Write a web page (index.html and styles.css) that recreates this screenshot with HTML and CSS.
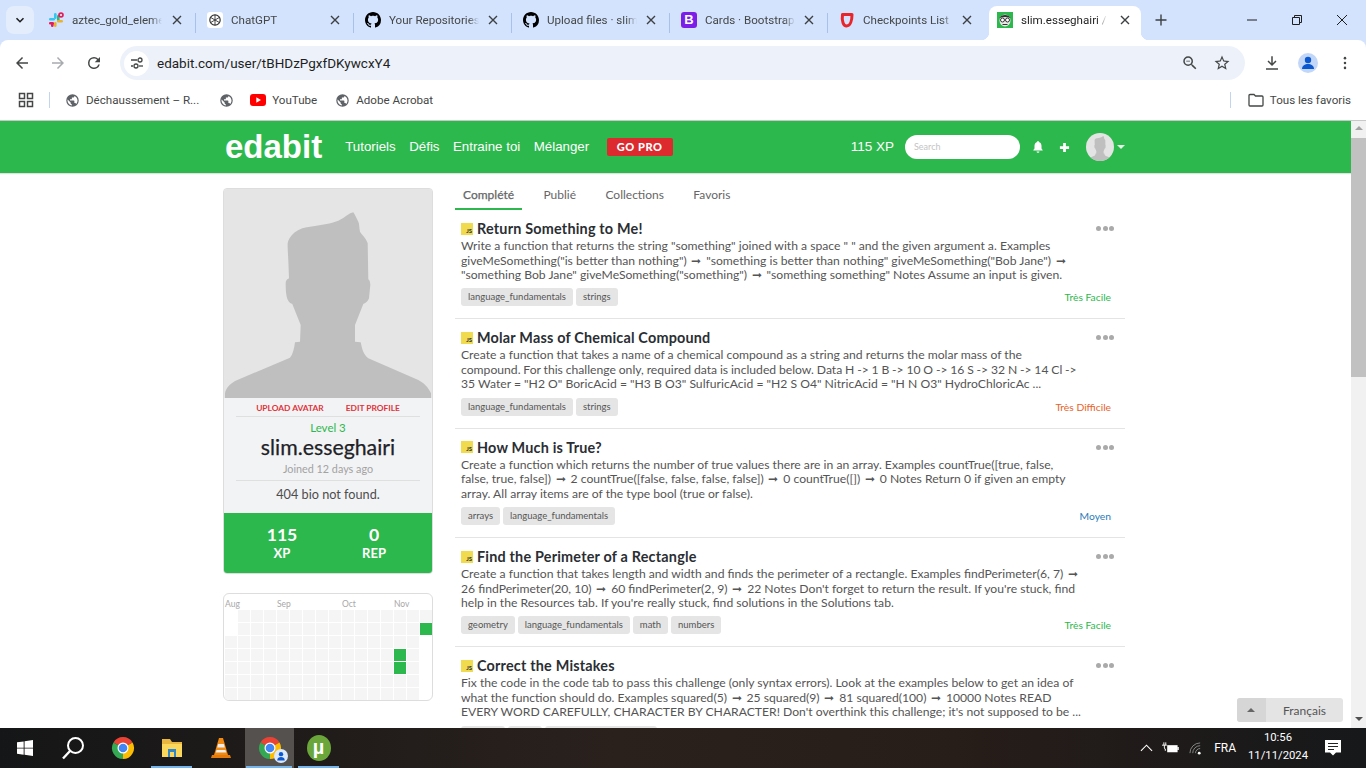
FILE: index.html
```html
<!DOCTYPE html>
<html lang="fr">
<head>
<meta charset="utf-8">
<title>slim.esseghairi / Edabit</title>
<link rel="stylesheet" href="styles.css">
</head>
<body>
<svg class="defs" width="0" height="0" aria-hidden="true">
  <symbol id="person" viewBox="0 0 208 209"><path d="M129.3 23.3C125 24 122 28 114.3 31.7C106 35 99 35.500 91 37C86 38 83 38 78.300 39.300C72 42 68 45 65.700 49C63 53 63.700 56 63.700 60L64.300 71L65 89.300C62 91 61.500 92 61.700 96C61.700 101 62 104 62.700 107.700C63.500 111 65 114 68.300 115L76.700 136L76 152.700L71 153.300C70 160 69 165 66 168.700L11 192C6 195 2 199 1 204.300V209H207V204.300C204 198 200 194 194.300 191L144.300 169.300C140 166 138.500 161 137.700 157.700L136.700 153.300L131 152.700V136L139.300 115C142 114 144 112 145 109.300L146.300 96C146.300 93 145.500 91 144.300 90.300L143.700 54.300C142 49 138 46 136 42.700C135 38 135.500 35 134.300 32.700C132.500 29 131 26 129.300 23.300Z"/></symbol>
  <symbol id="globe" viewBox="0 0 24 24"><path d="M12 2a10 10 0 1 0 0 20 10 10 0 0 0 0-20zM4 12c0-.6.1-1.200.2-1.800L9 15v1c0 1.100.9 2 2 2v2c-3.900-.5-7-3.900-7-8zm13.900 5.400c-.3-.8-1-1.400-1.900-1.400h-1v-3c0-.6-.4-1-1-1H8v-2h2c.6 0 1-.4 1-1V7h2c1.100 0 2-.9 2-2v-.4c2.900 1.200 5 4.100 5 7.400 0 2.100-.8 4-2.100 5.400z"/></symbol>
  <symbol id="github" viewBox="0 0 16 16"><path d="M8 0C3.580 0 0 3.580 0 8c0 3.540 2.290 6.530 5.470 7.590.4.070.55-.17.55-.38 0-.19-.01-.82-.01-1.490-2.010.37-2.530-.49-2.690-.94-.09-.23-.48-.94-.82-1.130-.28-.15-.68-.52-.01-.53.63-.01 1.080.58 1.230.82.720 1.210 1.870.87 2.330.66.070-.52.280-.87.510-1.070-1.780-.2-3.640-.89-3.640-3.950 0-.87.310-1.590.820-2.150-.08-.2-.36-1.020.08-2.120 0 0 .67-.21 2.200.82.640-.18 1.320-.27 2-.27s1.360.09 2 .27c1.530-1.040 2.200-.82 2.200-.82.440 1.100.160 1.920.08 2.120.51.560.82 1.270.82 2.150 0 3.070-1.870 3.750-3.650 3.950.29.250.54.730.54 1.480 0 1.070-.01 1.930-.01 2.200 0 .21.150.46.550.38A8.010 8.010 0 0 0 16 8c0-4.420-3.580-8-8-8z"/></symbol>
  <symbol id="chrome" viewBox="0 0 24 24"><path fill="#ea4335" d="M12 12L2.470 6.500A11 11 0 0 1 21.530 6.500Z"/><path fill="#fbbc04" d="M12 12L21.530 6.500A11 11 0 0 1 12 23Z"/><path fill="#34a853" d="M12 12L12 23A11 11 0 0 1 2.470 6.500Z"/><circle cx="12" cy="12" r="5.500" fill="#fff"/><circle cx="12" cy="12" r="4.300" fill="#4285f4"/></symbol>
  <symbol id="close" viewBox="0 0 12 12"><path d="M2 2l8 8M10 2l-8 8" fill="none" stroke="#3c4043" stroke-width="1.400"/></symbol>
</svg>

<div class="tabstrip">
  <button class="tabmenu"><svg width="10" height="10" viewBox="0 0 10 10"><path d="M1.500 3.200L5 6.700l3.500-3.500" fill="none" stroke="#1f1f1f" stroke-width="1.600"/></svg></button>
  <div class="tab sep">
    <svg class="fav" viewBox="0 0 16 16"><rect x="1" y="6" width="6" height="2.600" rx="1.300" fill="#36c5f0"/><rect x="6" y="1" width="2.600" height="6" rx="1.300" fill="#36c5f0"/><rect x="9" y="3" width="2.600" height="6" rx="1.300" fill="#2eb67d"/><rect x="9" y="8" width="6" height="2.600" rx="1.300" fill="#ecb22e"/><rect x="6" y="10" width="2.600" height="5" rx="1.300" fill="#ecb22e"/><rect x="1" y="10" width="5" height="2.600" rx="1.300" fill="#e01e5a"/><rect x="3" y="11" width="2.600" height="4" rx="1.300" fill="#e01e5a"/><circle cx="13" cy="3" r="2.800" fill="#e01e5a"/><circle cx="13" cy="3" r="1" fill="#fff"/></svg>
    <span class="tabtitle">aztec_gold_elements</span><svg class="x"><use href="#close"/></svg>
  </div>
  <div class="tab sep">
    <svg class="fav" viewBox="0 0 16 16"><rect width="16" height="16" rx="3" fill="#fff"/><circle cx="8" cy="8" r="5.200" fill="none" stroke="#333" stroke-width="1.200"/><path d="M8 2.800v10.400M3.500 5.400l9 5.200M12.500 5.400l-9 5.200" stroke="#333" stroke-width=".9"/></svg>
    <span class="tabtitle">ChatGPT</span><svg class="x"><use href="#close"/></svg>
  </div>
  <div class="tab sep">
    <svg class="fav"><use href="#github"/></svg>
    <span class="tabtitle">Your Repositories</span><svg class="x"><use href="#close"/></svg>
  </div>
  <div class="tab sep">
    <svg class="fav"><use href="#github"/></svg>
    <span class="tabtitle">Upload files · slim</span><svg class="x"><use href="#close"/></svg>
  </div>
  <div class="tab sep">
    <span class="fav bootstrap">B</span>
    <span class="tabtitle">Cards · Bootstrap</span><svg class="x"><use href="#close"/></svg>
  </div>
  <div class="tab">
    <svg class="fav" viewBox="0 0 16 16"><path d="M3.500 2.500h9.500C13 8 11.500 14 7.500 14 4.500 14 2.500 9 3.500 2.500z" fill="none" stroke="#e8252b" stroke-width="3" stroke-linejoin="round"/></svg>
    <span class="tabtitle">Checkpoints List</span><svg class="x"><use href="#close"/></svg>
  </div>
  <div class="tab active">
    <svg class="fav" viewBox="0 0 16 16"><rect width="16" height="16" fill="#2db84d"/><ellipse cx="8" cy="8.500" rx="5.500" ry="6" fill="#e8e8e8"/><path d="M2.500 6C4 2 12 2 13.500 6 10 4.500 6 4.500 2.500 6z" fill="#333"/><circle cx="5.500" cy="8" r="2" fill="#fff" stroke="#333"/><circle cx="10.500" cy="8" r="2" fill="#fff" stroke="#333"/><path d="M5.500 12.500h5" stroke="#333"/></svg>
    <span class="tabtitle short">slim.esseghairi / Edabit</span><svg class="x"><use href="#close"/></svg>
  </div>
  <svg class="newtab" viewBox="0 0 12 12"><path d="M6 .5v11M.5 6h11" stroke="#3c4043" stroke-width="1.400"/></svg>
  <div class="winctl">
    <svg viewBox="0 0 12 12"><path d="M1 6h10" stroke="#1f1f1f"/></svg>
    <svg viewBox="0 0 12 12"><path d="M1.500 3.500h7v7h-7zM3.500 3.500v-2h7v7h-2" fill="none" stroke="#1f1f1f"/></svg>
    <svg viewBox="0 0 12 12"><path d="M1 1l10 10M11 1L1 11" stroke="#1f1f1f"/></svg>
  </div>
</div>

<div class="toolbar">
  <svg class="tool" viewBox="0 0 24 24"><path fill="#444746" d="M20 11H7.830l5.590-5.590L12 4l-8 8 8 8 1.410-1.410L7.830 13H20z"/></svg>
  <svg class="tool" viewBox="0 0 24 24"><path fill="#a8abae" d="M4 11h12.170l-5.590-5.590L12 4l8 8-8 8-1.410-1.410L16.170 13H4z"/></svg>
  <svg class="tool" viewBox="0 0 24 24"><path fill="#444746" d="M17.650 6.350A7.960 7.960 0 0 0 12 4a8 8 0 1 0 7.740 10h-2.080A6 6 0 1 1 12 6c1.660 0 3.140.69 4.220 1.780L13 11h7V4l-2.350 2.350z"/></svg>
  <div class="omnibox">
    <span class="siteinfo"><svg width="14" height="14" viewBox="0 0 14 14"><path d="M1 4h6M1 10h2" stroke="#444746" stroke-width="1.300"/><circle cx="10" cy="4" r="2" fill="none" stroke="#444746" stroke-width="1.300"/><circle cx="6" cy="10" r="2" fill="none" stroke="#444746" stroke-width="1.300"/><path d="M9 10h4" stroke="#444746" stroke-width="1.300"/></svg></span>
    <span class="url">edabit.com/user/tBHDzPgxfDKywcxY4</span>
    <svg class="omniicon zoomicon" viewBox="0 0 24 24"><path fill="#444746" d="M15.500 14h-.79l-.28-.27A6.470 6.470 0 0 0 16 9.500 6.500 6.500 0 1 0 9.500 16c1.610 0 3.090-.59 4.230-1.570l.27.28v.79l5 4.990L20.490 19l-4.990-5zm-6 0C7.010 14 5 11.990 5 9.500S7.010 5 9.500 5 14 7.010 14 9.500 11.990 14 9.500 14zM7 9h5v1H7z"/></svg>
    <svg class="omniicon staricon" viewBox="0 0 24 24"><path fill="#444746" d="M22 9.240l-7.190-.62L12 2 9.190 8.630 2 9.240l5.460 4.730L5.820 21 12 17.270 18.180 21l-1.630-7.030L22 9.240zM12 15.400l-3.760 2.270 1-4.280-3.320-2.880 4.380-.38L12 6.100l1.710 4.040 4.380.38-3.320 2.880 1 4.280L12 15.400z"/></svg>
  </div>
  <svg class="tool" viewBox="0 0 24 24"><path fill="#444746" d="M12 16l-6-6 1.400-1.400 3.600 3.600V3h2v9.200l3.600-3.600L18 10zM4 19h16v2H4z"/></svg>
  <span class="profile"><svg width="16" height="16" viewBox="0 0 16 16"><circle cx="8" cy="5" r="3.200" fill="#0b57d0"/><path d="M2 14c0-3.500 3-5 6-5s6 1.500 6 5z" fill="#0b57d0"/></svg></span>
  <svg class="tool" viewBox="0 0 24 24"><circle cx="12" cy="5.500" r="1.700" fill="#444746"/><circle cx="12" cy="12" r="1.700" fill="#444746"/><circle cx="12" cy="18.500" r="1.700" fill="#444746"/></svg>
</div>

<div class="bookmarks">
  <svg class="apps" viewBox="0 0 16 16"><path d="M1.500 1.500h5v5h-5zM9.500 1.500h5v5h-5zM1.500 9.500h5v5h-5zM9.500 9.500h5v5h-5z" fill="none" stroke="#444746" stroke-width="1.500"/></svg>
  <span class="bmsep first"></span>
  <span class="bm"><svg class="bmicon"><use href="#globe"/></svg>Déchaussement – R...</span>
  <span class="bm solo"><svg class="bmicon"><use href="#globe"/></svg></span>
  <span class="bm"><svg class="yt" viewBox="0 0 16 12"><rect width="16" height="12" rx="3" fill="#f00"/><path d="M6.300 3.300v5.400L11 6z" fill="#fff"/></svg>YouTube</span>
  <span class="bm"><svg class="bmicon"><use href="#globe"/></svg>Adobe Acrobat</span>
  <span class="bmsep last"></span>
  <span class="bm allbm"><svg class="folder" viewBox="0 0 16 14"><path d="M1 2.500A1 1 0 0 1 2 1.500h4l1.500 1.500H14a1 1 0 0 1 1 1V12a1 1 0 0 1-1 1H2a1 1 0 0 1-1-1z" fill="none" stroke="#444746" stroke-width="1.300"/></svg>Tous les favoris</span>
</div>

<div class="viewport">
  <div class="page">
    <nav class="nav">
      <span class="logo">edabit</span>
      <a class="navlink">Tutoriels</a>
      <a class="navlink">Défis</a>
      <a class="navlink">Entraine toi</a>
      <a class="navlink">Mélanger</a>
      <span class="gopro">GO PRO</span>
      <span class="xp">115 XP</span>
      <span class="search">Search</span>
      <svg class="bell" viewBox="0 0 24 24"><path fill="#fff" d="M12 22a2.500 2.500 0 0 0 2.500-2.500h-5A2.500 2.500 0 0 0 12 22zm8-5l-2-2.500V10c0-3.200-2-5.800-4.500-6.500V3a1.500 1.500 0 0 0-3 0v.5C8 4.200 6 6.800 6 10v4.500L4 17v1h16z"/></svg>
      <svg class="plus" viewBox="0 0 12 12"><path d="M6 1v10M1 6h10" stroke="#fff" stroke-width="3"/></svg>
      <span class="navavatar"><svg width="28" height="28"><use href="#person"/></svg></span>
      <span class="caret"></span>
    </nav>

    <div class="content">
      <aside class="side">
        <section class="profilecard">
          <svg class="photo"><use href="#person"/></svg>
          <div class="info">
            <div class="links"><a>UPLOAD AVATAR</a><a>EDIT PROFILE</a></div>
            <div class="level">Level 3</div>
            <div class="name">slim.esseghairi</div>
            <div class="joined">Joined 12 days ago</div>
            <div class="bio">404 bio not found.</div>
          </div>
          <div class="stats">
            <div class="stat"><b>115</b><span>XP</span></div>
            <div class="stat"><b>0</b><span>REP</span></div>
          </div>
        </section>
        <section class="heatcard">
          <div class="months"><span class="m1">Aug</span><span class="m2">Sep</span><span class="m3">Oct</span><span class="m4">Nov</span></div>
          <div class="heat">
            <u></u><u></u><i></i><i></i><i></i><i></i><i></i>
            <i></i><i></i><i></i><i></i><i></i><i></i><i></i>
            <i></i><i></i><i></i><i></i><i></i><i></i><i></i>
            <i></i><i></i><i></i><i></i><i></i><i></i><i></i>
            <i></i><i></i><i></i><i></i><i></i><i></i><i></i>
            <i></i><i></i><i></i><i></i><i></i><i></i><i></i>
            <i></i><i></i><i></i><i></i><i></i><i></i><i></i>
            <i></i><i></i><i></i><i></i><i></i><i></i><i></i>
            <i></i><i></i><i></i><i></i><i></i><i></i><i></i>
            <i></i><i></i><i></i><i></i><i></i><i></i><i></i>
            <i></i><i></i><i></i><i></i><i></i><i></i><i></i>
            <i></i><i></i><i></i><i></i><i></i><i></i><i></i>
            <i></i><i></i><i></i><i></i><i></i><i></i><i></i>
            <i></i><i></i><i></i><i class="on"></i><i class="on"></i><i></i><i></i>
            <i></i><i></i><i></i><i></i><i></i><i></i><i></i>
            <i></i><i class="on"></i><u></u><u></u><u></u><u></u><u></u>
          </div>
        </section>
      </aside>

      <main class="feed">
        <div class="feedtabs">
          <a class="ftab selected">Complété</a>
          <a class="ftab">Publié</a>
          <a class="ftab">Collections</a>
          <a class="ftab">Favoris</a>
        </div>

        <article class="item">
          <div class="itemhead"><span class="js">JS</span><h3>Return Something to Me!</h3><span class="dots"><i></i><i></i><i></i></span></div>
          <p class="desc">Write a function that returns the string "something" joined with a space " " and the given argument a. Examples giveMeSomething("is better than nothing") <span class="arr">➞</span> "something is better than nothing" giveMeSomething("Bob Jane") <span class="arr">➞</span> "something Bob Jane" giveMeSomething("something") <span class="arr">➞</span> "something something" Notes Assume an input is given.</p>
          <div class="itemfoot"><span class="tag">language_fundamentals</span><span class="tag">strings</span><span class="diff easy">Très Facile</span></div>
        </article>

        <article class="item">
          <div class="itemhead"><span class="js">JS</span><h3>Molar Mass of Chemical Compound</h3><span class="dots"><i></i><i></i><i></i></span></div>
          <p class="desc">Create a function that takes a name of a chemical compound as a string and returns the molar mass of the <span class="tight">compound. For this challenge only, required data is included below. Data H -&#8288;&gt; 1 B -&#8288;&gt; 10 O -&#8288;&gt; 16 S -&#8288;&gt; 32 N -&#8288;&gt; 14 Cl -&#8288;&gt;</span> 35 Water = "H2 O" BoricAcid = "H3 B O3" SulfuricAcid = "H2 S O4" NitricAcid = "H N O3" HydroChloricAc ...</p>
          <div class="itemfoot"><span class="tag">language_fundamentals</span><span class="tag">strings</span><span class="diff hard">Très Difficile</span></div>
        </article>

        <article class="item">
          <div class="itemhead"><span class="js">JS</span><h3>How Much is True?</h3><span class="dots"><i></i><i></i><i></i></span></div>
          <p class="desc">Create a function which returns the number of true values there are in an array. Examples countTrue([true, false, false, true, false]) <span class="arr">➞</span> 2 countTrue([false, false, false, false]) <span class="arr">➞</span> 0 countTrue([]) <span class="arr">➞</span> 0 Notes Return 0 if given an empty array. All array items are of the type bool (true or false).</p>
          <div class="itemfoot"><span class="tag">arrays</span><span class="tag">language_fundamentals</span><span class="diff medium">Moyen</span></div>
        </article>

        <article class="item">
          <div class="itemhead"><span class="js">JS</span><h3>Find the Perimeter of a Rectangle</h3><span class="dots"><i></i><i></i><i></i></span></div>
          <p class="desc">Create a function that takes length and width and finds the perimeter of a rectangle. Examples findPerimeter(6, 7) <span class="arr">➞</span> 26 findPerimeter(20, 10) <span class="arr">➞</span> 60 findPerimeter(2, 9) <span class="arr">➞</span> 22 Notes Don't forget to return the result. If you're stuck, find help in the Resources tab. If you're really stuck, find solutions in the Solutions tab.</p>
          <div class="itemfoot"><span class="tag">geometry</span><span class="tag">language_fundamentals</span><span class="tag">math</span><span class="tag">numbers</span><span class="diff easy">Très Facile</span></div>
        </article>

        <article class="item">
          <div class="itemhead"><span class="js">JS</span><h3>Correct the Mistakes</h3><span class="dots"><i></i><i></i><i></i></span></div>
          <p class="desc">Fix the code in the code tab to pass this challenge (only syntax errors). Look at the examples below to get an idea of what the function should do. Examples squared(5) <span class="arr">➞</span> 25 squared(9) <span class="arr">➞</span> 81 squared(100) <span class="arr">➞</span> 10000 Notes READ EVERY WORD CAREFULLY, CHARACTER BY CHARACTER! Don't overthink this challenge; it's not supposed to be ...</p>
          <div class="itemfoot"><span class="tag">algebra</span><span class="tag">bugs</span><span class="tag">language_fundamentals</span></div>
        </article>
      </main>
    </div>

    <div class="langpicker"><span class="langarrow"></span><span class="langname">Français</span></div>
  </div>

  <div class="scrollbar">
    <span class="arrow up"></span>
    <span class="thumb"></span>
    <span class="arrow down"></span>
  </div>
</div>

<footer class="taskbar">
  <span class="tb"><svg class="win" viewBox="0 0 18 18"><path fill="#fff" d="M0 2.600l7.500-1v7H0zM8.500 1.400L18 0v8.600H8.500zM0 9.600h7.500v7l-7.500-1zM8.500 9.600H18V18l-9.500-1.400z"/></svg></span>
  <span class="tb"><svg class="glass" viewBox="0 0 24 24"><circle cx="13.500" cy="9.500" r="7.500" fill="none" stroke="#fff" stroke-width="2"/><path d="M8 15l-7 7.500" stroke="#fff" stroke-width="2.400"/></svg></span>
  <span class="tb"><svg class="app"><use href="#chrome"/></svg></span>
  <span class="tb running"><svg class="app" viewBox="0 0 24 24"><path fill="#e9b640" d="M2 3h8l2 3h10v15H2z"/><path fill="#fbd75b" d="M2 8h20v13H2z"/><path fill="#2f86c9" d="M8 13h8v8h-2v-5h-4v5H8z"/></svg></span>
  <span class="tb"><svg class="app" viewBox="0 0 24 24"><path fill="#f08a12" d="M10 2h4l5 17H5z"/><path fill="#eee" d="M9.200 8h5.600l1 3.500H8.200zM7.500 14h9l.6 2.500H6.900z"/><path fill="#e67a0a" d="M3 19h18l1 3H2z"/></svg></span>
  <span class="tb running focused"><svg class="app"><use href="#chrome"/></svg><span class="badge"><svg width="10" height="10" viewBox="0 0 16 16"><circle cx="8" cy="5" r="3.500" fill="#0b57d0"/><path d="M2 15c0-4 3-5.500 6-5.500s6 1.500 6 5.500z" fill="#0b57d0"/></svg></span></span>
  <span class="tb running"><span class="torrent">µ</span></span>
  <div class="tray">
    <svg class="chev" viewBox="0 0 14 8"><path d="M1 7l6-6 6 6" fill="none" stroke="#fff" stroke-width="1.200"/></svg>
    <svg class="batt" viewBox="0 0 18 12"><path d="M0 3h5M2 0v3M4 0v3M2.500 3v3a1 1 0 0 0 1 1v2" fill="none" stroke="#fff"/><rect x="5.500" y="3" width="11" height="7.500" fill="#fff"/><path d="M17 5v3" stroke="#fff" stroke-width="1.500"/></svg>
    <svg class="wifi" viewBox="0 0 14 14"><path d="M1 12A11 11 0 0 1 12 1M4 12a8 8 0 0 1 8-8M7 12a5 5 0 0 1 5-5" fill="none" stroke="#8c8c8c"/><circle cx="11" cy="12" r="1.500" fill="#fff"/></svg>
    <span class="lang">FRA</span>
    <div class="clock"><span>10:56</span><span>11/11/2024</span></div>
    <svg class="notif" viewBox="0 0 16 16"><path fill="#fff" d="M0 0h16v12.500h-5L8 15.500l-3-3H0z"/><path d="M3 3.500h10M3 6.500h10M3 9.500h6" stroke="#222" stroke-width="1"/></svg>
  </div>
</footer>
</body>
</html>
```

FILE: styles.css
```css
* { box-sizing: border-box; }
html, body { margin: 0; height: 100%; }
body {
  width: 1366px;
  height: 768px;
  overflow: hidden;
  display: flex;
  flex-direction: column;
  font-family: "Lato", sans-serif;
  background: #d3e3fd;
}
.defs { position: absolute; }
button { border: 0; padding: 0; }
a { cursor: pointer; }

/* Browser tab strip */
.tabstrip {
  flex: 0 0 40px;
  display: flex;
  align-items: flex-end;
  padding-left: 6px;
  font-family: "Roboto", sans-serif;
  font-size: 11.600px;
  color: #444746;
}
.tabmenu {
  width: 28px;
  height: 28px;
  margin: 0 5px 6px 0;
  border-radius: 8px;
  background: #e3edfc;
  display: flex;
  align-items: center;
  justify-content: center;
}
.tab {
  width: 158px;
  height: 34px;
  display: flex;
  align-items: center;
  padding: 0 15px 6px 9px;
  position: relative;
  flex: none;
}
.tab:first-of-type { width: 159px; }
.tab.sep::after {
  content: "";
  position: absolute;
  right: 2px;
  top: 7px;
  width: 1px;
  height: 20px;
  background: #a8c1ea;
}
.fav { width: 16px; height: 16px; flex: none; }
.bootstrap {
  background: #7c1ee8;
  color: #fff;
  font: bold 13px/16px "Liberation Sans", sans-serif;
  text-align: center;
  border-radius: 3px;
}
.tabtitle {
  width: 90px;
  margin-left: 8px;
  white-space: nowrap;
  overflow: hidden;
  -webkit-mask-image: linear-gradient(90deg, #000 88%, transparent);
  mask-image: linear-gradient(90deg, #000 88%, transparent);
}
.x { width: 12px; height: 12px; margin-left: auto; }
.tab.active {
  width: 152px;
  margin-left: 1px;
  padding: 0 10px 6px 8px;
  background: #fff;
  border-radius: 8px 8px 0 0;
  color: #1f1f1f;
}
.tab.active::before, .tab.active::after {
  content: "";
  position: absolute;
  bottom: 0;
  width: 8px;
  height: 8px;
}
.tab.active::before { left: -8px; background: radial-gradient(circle at 0 0, #d3e3fd 8px, #fff 8.500px); }
.tab.active::after { right: -8px; background: radial-gradient(circle at 100% 0, #d3e3fd 8px, #fff 8.500px); }
.tabtitle.short { width: 86px; }
.newtab { width: 12px; height: 12px; margin: 0 0 14px 14px; flex: none; }
.winctl {
  margin-left: auto;
  display: flex;
  align-items: center;
  gap: 33px;
  padding: 0 18px 14px 0;
}
.winctl svg { width: 12px; height: 12px; }

/* Browser toolbar */
.toolbar {
  flex: 0 0 40px;
  display: flex;
  align-items: flex-start;
  background: #fff;
  border-radius: 8px 8px 0 0;
  padding: 13px 0 0 13px;
  gap: 18px;
}
.tool { width: 18px; height: 18px; flex: none; margin-top: 1px; }
.omnibox {
  width: 1125px;
  height: 34px;
  margin: -7px 0 0 -1px;
  padding: 0 14px 0 4px;
  background: #edf2fa;
  border-radius: 17px;
  display: flex;
  align-items: center;
}
.siteinfo {
  width: 25px;
  height: 25px;
  border-radius: 50%;
  background: #fff;
  display: flex;
  align-items: center;
  justify-content: center;
}
.url {
  margin-left: 8px;
  font: 13.500px "Roboto", sans-serif;
  color: #1f1f1f;
}
.omniicon { width: 18px; height: 18px; }
.zoomicon { margin-left: auto; }
.staricon { margin-left: 14px; }
.profile {
  width: 20px;
  height: 20px;
  margin-left: -1px;
  border-radius: 50%;
  background: #c2d7f7;
  display: flex;
  align-items: center;
  justify-content: center;
  flex: none;
}

/* Bookmarks */
.bookmarks {
  flex: 0 0 40px;
  display: flex;
  align-items: center;
  background: #fff;
  padding: 0 15px 0 18px;
  font: 11.600px "Roboto", sans-serif;
  color: #444746;
}
.apps { width: 16px; height: 16px; flex: none; }
.bmsep { width: 1px; height: 16px; background: #c4d4ee; flex: none; }
.bmsep.first { margin: 0 15px; }
.bmsep.last { margin-left: auto; margin-right: 17px; }
.bm { display: flex; align-items: center; margin-right: 17px; white-space: nowrap; }
.bmsep.first + .bm { margin-right: 20px; }
.bm.solo { margin-right: 16px; }
.solo + .bm { margin-right: 18px; }
.bmicon { width: 15px; height: 15px; margin-right: 6px; fill: #5f6368; }
.solo .bmicon { margin-right: 0; }
.yt { width: 16px; height: 12px; margin-right: 6px; }
.folder { width: 16px; height: 14px; margin-right: 6px; }
.allbm { margin-right: 0; }

/* Page viewport */
.viewport {
  flex: 0 0 608px;
  display: flex;
  overflow: hidden;
  background: #fff;
  border-top: 1px solid #c8c8c8;
}
.page { flex: 1; min-width: 0; position: relative; overflow: hidden; }
.nav {
  height: 52px;
  background: #2db84d;
  box-shadow: 0 1px 1px rgba(0, 0, 0, .12);
  display: flex;
  align-items: center;
  padding-left: 225px;
  color: #fff;
  font-family: "Liberation Sans", sans-serif;
}
.logo { font-size: 33px; font-weight: bold; margin-right: 23px; }
.navlink { font-size: 13.300px; margin: 0 13.500px 2px 0; }
.gopro {
  margin-left: 4px;
  width: 66px;
  height: 18px;
  background: #dc2a2e;
  border-radius: 2px;
  font: 900 11px/18px "Lato", sans-serif;
  letter-spacing: .6px;
  text-align: center;
}
.xp { margin: 0 0 2px 178px; font-size: 13.500px; }
.search {
  width: 115px;
  height: 24px;
  margin-left: 11px;
  padding-left: 9px;
  border-radius: 12px;
  background: #fff;
  color: #c4c4c4;
  font: 9px/24px "Lato", sans-serif;
}
.bell { width: 14px; height: 14px; margin-left: 11px; }
.plus { width: 11px; height: 11px; margin-left: 14px; }
.navavatar {
  width: 28px;
  height: 28px;
  margin-left: 16px;
  border-radius: 50%;
  background: #e4e4e4;
  fill: #bfbfbf;
  overflow: hidden;
}
.caret {
  margin-left: 3px;
  border: 4px solid transparent;
  border-top-color: #e4f5e8;
  border-bottom: 0;
}

.content { display: flex; padding: 15px 0 0 223px; gap: 22px; }
.side { width: 210px; flex: none; display: flex; flex-direction: column; gap: 19px; }
.profilecard {
  border: 1px solid #ddd;
  border-radius: 4px;
  overflow: hidden;
  background: #f2f3f5;
}
.photo { display: block; width: 208px; height: 209px; background: #e5e5e5; fill: #bfbfbf; }
.info { padding: 0 12px; text-align: center; height: 115px; }
.links {
  display: flex;
  justify-content: center;
  gap: 22px;
  height: 19px;
  border-bottom: 1px solid #dfdfdf;
  font-size: 8.400px;
  font-weight: 700;
  line-height: 20px;
  color: #e0343a;
}
.level { margin-top: 4px; font-size: 11.500px; line-height: 14px; color: #2db84d; }
.name {
  font-size: 21.300px;
  line-height: 24px;
  color: #1e2227;
  -webkit-text-stroke: .25px #1e2227;
}
.joined {
  height: 22px;
  font-size: 10.800px;
  line-height: 19px;
  color: #a2a2a2;
  border-bottom: 1px solid #dfdfdf;
}
.bio { margin-top: 5px; font-size: 12.700px; line-height: 16px; color: #4d4d4d; }
.stats { display: flex; height: 60px; background: #2db84d; color: #fff; }
.stat { flex: 1 1 50%; display: flex; flex-direction: column; align-items: center; padding-top: 12px; }
.stat:first-child { padding-left: 12px; }
.stat:last-child { padding-right: 12px; }
.stat b { font-size: 17.600px; line-height: 20px; }
.stat span { font-size: 13px; font-weight: 700; line-height: 16px; }

.heatcard {
  border: 1px solid #ddd;
  border-radius: 6px;
  height: 108px;
  overflow: hidden;
}
.months { position: relative; height: 16px; font-size: 8.500px; line-height: 20px; color: #a8a8a8; }
.months span { position: absolute; top: 0; }
.m1 { left: 1px; }
.m2 { left: 53px; }
.m3 { left: 118px; }
.m4 { left: 170px; }
.heat {
  display: grid;
  grid-template-rows: repeat(7, 12px);
  grid-auto-flow: column;
  grid-auto-columns: 12px;
  gap: 1px;
  padding-left: 1px;
}
.heat i { background: #f5f5f5; }
.heat i.on { background: #2db84d; }

.feed { width: 670px; flex: none; }
.feedtabs { display: flex; height: 22px; gap: 13.400px; font-size: 12px; color: #666; }
.ftab { padding: 0 8px; line-height: 14px; }
.ftab.selected { -webkit-text-stroke: .25px #666; border-bottom: 2px solid #2db84d; }
.item { padding: 10.600px 11px 12px 6px; border-bottom: 1px solid #e4e4e4; }
.itemhead { display: flex; align-items: center; height: 16px; margin-bottom: 2.400px; }
.js {
  width: 12px;
  height: 12px;
  flex: none;
  margin-right: 4px;
  background: #f0db4f;
  color: #333;
  font-size: 6px;
  font-weight: 700;
  line-height: 15px;
  text-align: right;
  padding-right: 1px;
}
h3 { margin: 0; font-size: 14.400px; font-weight: 700; letter-spacing: .2px; color: #2a2e33; white-space: nowrap; }
.dots { display: flex; gap: 1.500px; margin-left: auto; }
.dots i { width: 5px; height: 5px; border-radius: 50%; background: #aaa; }
.desc {
  margin: 0;
  width: 622px;
  height: 43.830px;
  font-size: 12.160px;
  line-height: 14.600px;
  color: #555;
}
.arr { padding: 0 1.700px; }
.tight { word-spacing: -.3px; }
.itemfoot { display: flex; align-items: center; gap: 3px; margin-top: 5.500px; height: 18px; }
.tag {
  height: 18px;
  padding: 0 7px;
  background: #e5e5e5;
  border-radius: 3px;
  font-size: 9.500px;
  line-height: 17px;
  color: #555;
}
.diff { margin-left: auto; margin-right: 3px; font-size: 10.300px; }
.easy { color: #2db84d; }
.hard { color: #e8622a; }
.medium { color: #2b7bb9; }

.langpicker {
  position: absolute;
  right: 8px;
  bottom: 6px;
  width: 106px;
  height: 24px;
  display: flex;
  border-radius: 3px;
  background: #e4e4e4;
  overflow: hidden;
  font-size: 12px;
  line-height: 25px;
  color: #555;
}
.langarrow {
  width: 29px;
  background: #d6d6d6;
  position: relative;
}
.langarrow::after {
  content: "";
  position: absolute;
  left: 10px;
  top: 10px;
  border: 4px solid transparent;
  border-bottom-color: #666;
  border-top: 0;
}
.langname { margin-left: 17px; }

.scrollbar {
  width: 15px;
  flex: none;
  background: #f1f1f1;
  display: flex;
  flex-direction: column;
}
.arrow { height: 17px; position: relative; flex: none; }
.arrow::after {
  content: "";
  position: absolute;
  left: 3.500px;
  border: 4px solid transparent;
}
.arrow.up::after { top: 5px; border-bottom-color: #a3a3a3; border-top: 0; }
.arrow.down { margin-top: auto; }
.arrow.down::after { top: 6px; border-top-color: #505050; border-bottom: 0; }
.thumb { height: 239px; background: #c1c1c1; flex: none; }

/* Windows taskbar */
.taskbar {
  flex: 0 0 40px;
  display: flex;
  background: linear-gradient(90deg, #151617 0%, #2a211d 45%, #271d19 70%, #16181a 100%);
  color: #fff;
  font: 12px "Roboto", sans-serif;
}
.tb {
  width: 49px;
  display: flex;
  align-items: center;
  justify-content: center;
  position: relative;
  flex: none;
}
.running::after {
  content: "";
  position: absolute;
  left: 4px;
  right: 4px;
  bottom: 0;
  height: 2px;
  background: #75b5eb;
}
.focused { background: #55514e; }
.focused::after { left: 1px; right: 2px; }
.win { width: 16px; height: 16px; }
.glass { width: 24px; height: 24px; }
.app { width: 24px; height: 24px; }
.badge {
  position: absolute;
  right: 6px;
  bottom: 5px;
  width: 14px;
  height: 14px;
  border-radius: 50%;
  background: #dce8fb;
  display: flex;
  align-items: center;
  justify-content: center;
}
.torrent {
  width: 24px;
  height: 26px;
  border-radius: 50%;
  background: #6aa63a;
  color: #fff;
  font: bold 20px/24px "Liberation Sans", sans-serif;
  text-align: center;
}
.tray { margin-left: auto; display: flex; align-items: center; padding-right: 25px; }
.chev { width: 13px; height: 8px; }
.batt { width: 17px; height: 12px; margin-left: 9px; }
.wifi { width: 13px; height: 13px; margin-left: 10px; }
.lang { margin-left: 12px; }
.clock {
  width: 78px;
  margin-left: 3px;
  padding-bottom: 2px;
  font-size: 11.300px;
  display: flex;
  flex-direction: column;
  align-items: center;
  line-height: 18px;
}
.notif { width: 16px; height: 16px; margin-left: 8px; }
```
